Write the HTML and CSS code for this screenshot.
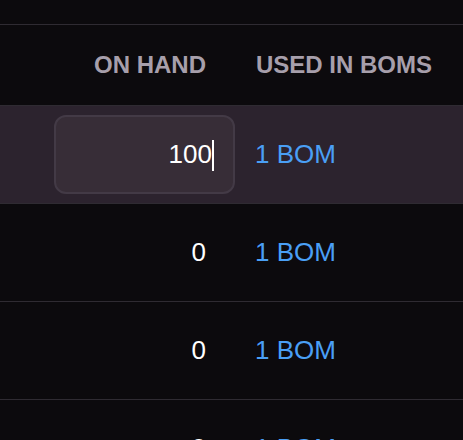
FILE: index.html
```html
<!DOCTYPE html>
<html>
<head>
<meta charset="utf-8">
<link rel="stylesheet" href="styles.css">
</head>
<body>
<div class="toolbar"></div>
<div class="table">
  <div class="row head">
    <div class="cell num"><span class="qty">ON HAND</span></div>
    <div class="cell used">USED IN BOMS</div>
  </div>
  <div class="row active">
    <div class="cell num">
      <div class="field"><span class="val">100</span><span class="caret"></span></div>
    </div>
    <div class="cell used"><a class="link">1 BOM</a></div>
  </div>
  <div class="row">
    <div class="cell num"><span class="qty">0</span></div>
    <div class="cell used"><a class="link">1 BOM</a></div>
  </div>
  <div class="row">
    <div class="cell num"><span class="qty">0</span></div>
    <div class="cell used"><a class="link">1 BOM</a></div>
  </div>
  <div class="row">
    <div class="cell num"><span class="qty">0</span></div>
    <div class="cell used"><a class="link">1 BOM</a></div>
  </div>
</div>
</body>
</html>
```
FILE: styles.css
```css
html, body {
  margin: 0;
  padding: 0;
  background: #0c0a0d;
  overflow: hidden;
}
body {
  font-family: "Liberation Sans", Arial, sans-serif;
  color: #ffffff;
  width: 463px;
  height: 440px;
}
.toolbar {
  height: 24px;
  border-bottom: 1px solid #2f2b32;
}
.table {
  display: flex;
  flex-direction: column;
}
.row {
  display: grid;
  grid-template-columns: 235px 1fr;
  height: 97px;
  border-bottom: 1px solid #2f2b32;
  align-items: center;
}
.row.head {
  height: 80px;
  font-weight: bold;
  font-size: 24px;
  color: #a79fab;
}
.row.active {
  background: #2c232e;
}
.cell.num {
  display: flex;
  justify-content: flex-end;
}
.qty {
  padding-right: 29px;
  font-size: 26px;
}
.head .qty {
  font-size: 24px;
}
.cell.used {
  padding-left: 20px;
}
.head .cell.used {
  padding-left: 21px;
}
.link {
  color: #4a9ff5;
  font-size: 26px;
}
.field {
  box-sizing: border-box;
  width: 181px;
  height: 79px;
  border: 2px solid #433a46;
  border-radius: 12px;
  background: #372d37;
  display: flex;
  align-items: center;
  justify-content: flex-end;
  padding-right: 19px;
  font-size: 26px;
}
.caret {
  display: inline-block;
  width: 2px;
  height: 31px;
  background: #ffffff;
  margin-top: 1px;
}
```
